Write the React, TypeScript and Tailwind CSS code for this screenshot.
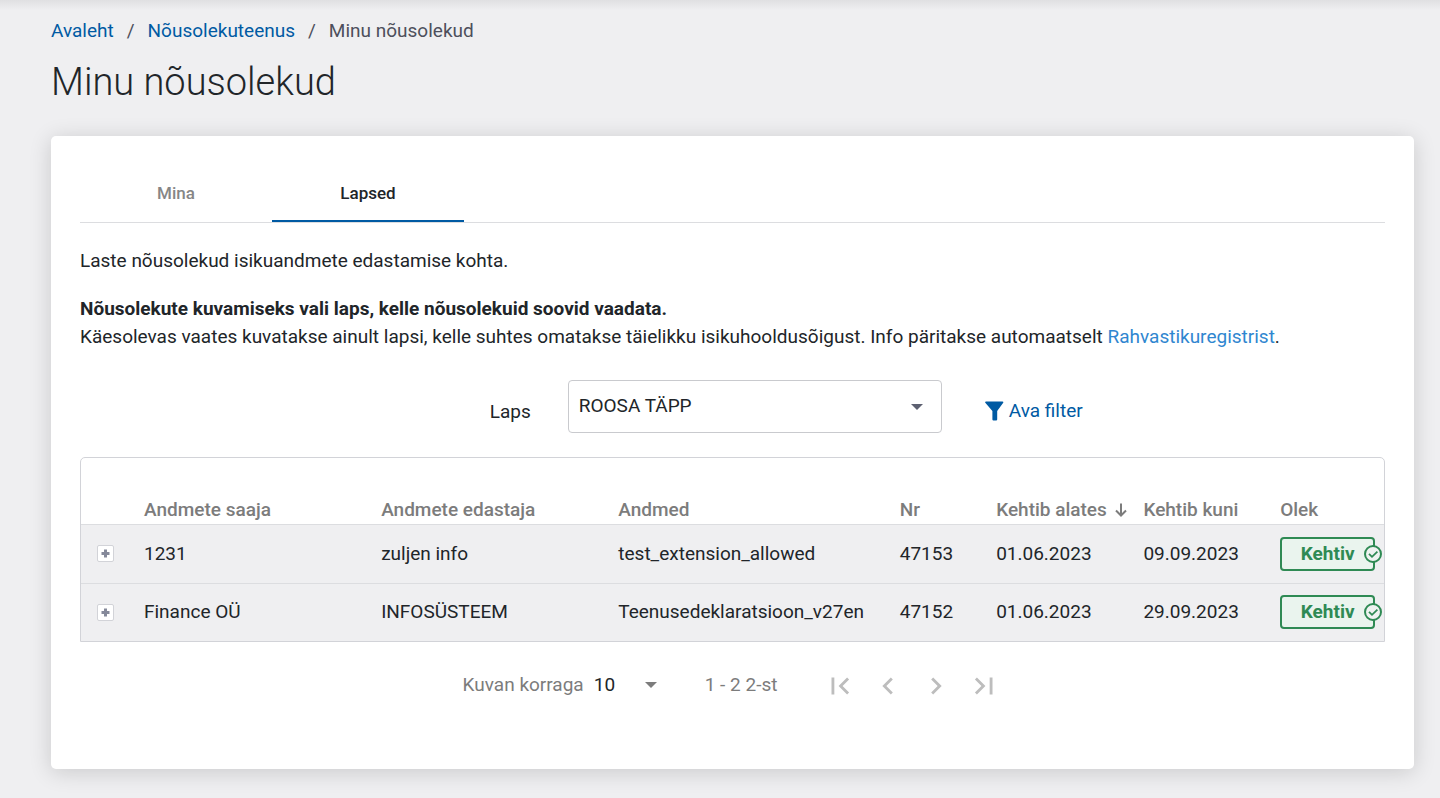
import React, { useState } from "react";

type Consent = {
  receiver: string;
  sender: string;
  data: string;
  nr: string;
  from: string;
  until: string;
  status: string;
};

const consents: Consent[] = [
  {
    receiver: "1231",
    sender: "zuljen info",
    data: "test_extension_allowed",
    nr: "47153",
    from: "01.06.2023",
    until: "09.09.2023",
    status: "Kehtiv",
  },
  {
    receiver: "Finance OÜ",
    sender: "INFOSÜSTEEM",
    data: "Teenusedeklaratsioon_v27en",
    nr: "47152",
    from: "01.06.2023",
    until: "29.09.2023",
    status: "Kehtiv",
  },
];

function Caret({ className }: { className: string }) {
  return (
    <svg className={className} width="12" height="6" viewBox="0 0 12 6" fill="currentColor" aria-hidden="true">
      <path d="M0 0h12L6 6z" />
    </svg>
  );
}

function Breadcrumbs() {
  return (
    <nav aria-label="Breadcrumb">
      <ol className="flex gap-[13px] text-[19px] leading-6">
        <li>
          <a href="#avaleht" className="text-[#005aa3]">Avaleht</a>
        </li>
        <li aria-hidden="true">/</li>
        <li>
          <a href="#nousolekuteenus" className="text-[#005aa3]">Nõusolekuteenus</a>
        </li>
        <li aria-hidden="true">/</li>
        <li aria-current="page">Minu nõusolekud</li>
      </ol>
    </nav>
  );
}

function Tabs() {
  const [active, setActive] = useState("Lapsed");
  return (
    <div role="tablist" className="flex border-b border-[#dcdde0]">
      {["Mina", "Lapsed"].map((tab) => (
        <button
          key={tab}
          type="button"
          role="tab"
          aria-selected={tab === active}
          onClick={() => setActive(tab)}
          className={
            tab === active
              ? "h-[58px] w-48 border-b-2 border-[#005aa3] pt-1 text-[17px] font-medium text-[#212529]"
              : "h-[58px] w-48 border-b-2 border-transparent pt-1 text-[17px] font-medium text-[#868686]"
          }
        >
          {tab}
        </button>
      ))}
    </div>
  );
}

function StatusBadge({ label }: { label: string }) {
  return (
    <span className="relative flex h-[34px] w-[95px] items-center justify-center rounded border-2 border-[#2f8a54] bg-[#eaf4ee] text-[19px] font-bold text-[#2f8a54]">
      {label}
      <svg className="absolute -right-[9px] top-[6px]" width="18" height="18" viewBox="0 0 18 18" fill="none" stroke="currentColor" aria-hidden="true">
        <circle cx="9" cy="9" r="8" strokeWidth="2" fill="#eff3f1" />
        <path d="M5 8.8l3 3 5.4-5.2" strokeWidth="1.8" />
      </svg>
    </span>
  );
}

function ConsentTable() {
  return (
    <div className="rounded-t-[5px] border border-[#d2d3d8]">
      <table className="w-full table-fixed text-left text-[19px] leading-6 text-[#212529]">
        <colgroup>
          <col className="w-[63px]" />
          <col className="w-[18.2%]" />
          <col className="w-[18.2%]" />
          <col className="w-[21.6%]" />
          <col className="w-[7.4%]" />
          <col className="w-[11.3%]" />
          <col className="w-[10.5%]" />
          <col />
        </colgroup>
        <thead className="text-[#7c7c7c]">
          <tr className="h-[66px] border-b border-[#dcdde0] align-bottom">
            <td />
            <th className="pb-[2px] font-medium">Andmete saaja</th>
            <th className="pb-[2px] font-medium">Andmete edastaja</th>
            <th className="pb-[2px] font-medium">Andmed</th>
            <th className="pb-[2px] font-medium">Nr</th>
            <th className="whitespace-nowrap pb-[2px] font-medium" aria-sort="descending">
              <button type="button" className="flex items-center gap-2">
                Kehtib alates
                <svg width="12" height="14" viewBox="0 0 12 14" fill="none" stroke="currentColor" strokeWidth="2" aria-hidden="true">
                  <path d="M6 0.5v12M1 7.5l5 5 5-5" />
                </svg>
              </button>
            </th>
            <th className="pb-[2px] font-medium">Kehtib kuni</th>
            <th className="pb-[2px] font-medium">Olek</th>
          </tr>
        </thead>
        <tbody>
          {consents.map((c) => (
            <tr key={c.nr} className="h-[59px] border-b border-[#dcdde0] bg-[#efeff1] last:h-[58px] last:border-b-0">
              <td className="pl-4">
                <button type="button" aria-label="Ava detailid" className="flex size-[17px] items-center justify-center rounded-xs border border-[#d2d3d8] bg-white text-[#85899a]">
                  <svg width="9" height="9" viewBox="0 0 9 9" fill="none" stroke="currentColor" strokeWidth="3" aria-hidden="true">
                    <path d="M4.5 0.5v8M0.5 4.5h8" />
                  </svg>
                </button>
              </td>
              <td>{c.receiver}</td>
              <td>{c.sender}</td>
              <td>{c.data}</td>
              <td>{c.nr}</td>
              <td>{c.from}</td>
              <td>{c.until}</td>
              <td><StatusBadge label={c.status} /></td>
            </tr>
          ))}
        </tbody>
      </table>
    </div>
  );
}

function PageButton({ label, path }: { label: string; path: string }) {
  return (
    <button type="button" aria-label={label} disabled className="flex size-12 items-center justify-center text-[#bdbdbd]">
      <svg width="34" height="34" viewBox="0 0 24 24" fill="currentColor" aria-hidden="true">
        <path d={path} />
      </svg>
    </button>
  );
}

function Pagination() {
  return (
    <div className="flex items-center justify-center pl-[6px] text-[19px] text-[#7c7c7c]">
      <label htmlFor="page-size" className="pr-[10px]">Kuvan korraga</label>
      <span className="relative flex items-center">
        <select id="page-size" defaultValue="10" className="w-[63px] appearance-none bg-transparent text-[#212529]">
          <option>10</option>
          <option>20</option>
        </select>
        <Caret className="pointer-events-none absolute right-0" />
      </span>
      <span className="pl-12 pr-[39px]">1 - 2 2-st</span>
      <div className="flex pt-[2px]">
        <PageButton label="Esimene leht" path="M18.41 16.59L13.82 12l4.59-4.59L17 6l-6 6 6 6zM6 6h2v12H6z" />
        <PageButton label="Eelmine leht" path="M15.41 7.41L14 6l-6 6 6 6 1.41-1.41L10.83 12z" />
        <PageButton label="Järgmine leht" path="M10 6L8.59 7.41 13.17 12l-4.58 4.59L10 18l6-6z" />
        <PageButton label="Viimane leht" path="M5.59 7.41L10.18 12l-4.59 4.59L7 18l6-6-6-6zM16 6h2v12h-2z" />
      </div>
    </div>
  );
}

export default function App() {
  return (
    <div className="min-h-screen bg-[#efeff1] font-['Roboto',sans-serif] text-[#4d4f5c]">
      <div className="h-[10px] bg-linear-to-b from-[#e0e0e2] to-[#efeff1]" />
      <main className="pb-7 pl-[51px] pr-[26px] pt-[9px]">
        <Breadcrumbs />
        <h1 className="pb-[30px] pt-[15px] text-[38px] font-light leading-12 text-[#212529]">Minu nõusolekud</h1>
        <section className="rounded-[5px] bg-white px-[29px] pb-[59px] pt-7 shadow-[0_3px_22px_rgba(0,0,0,0.16)]">
          <Tabs />
          <div className="pt-6 text-[19px] leading-7 text-[#212529]">
            <p className="pb-5">Laste nõusolekud isikuandmete edastamise kohta.</p>
            <p className="font-bold">Nõusolekute kuvamiseks vali laps, kelle nõusolekuid soovid vaadata.</p>
            <p>
              Käesolevas vaates kuvatakse ainult lapsi, kelle suhtes omatakse täielikku isikuhooldusõigust. Info päritakse automaatselt{" "}
              <a href="#rahvastikuregister" className="text-[#2f86d0]">Rahvastikuregistrist</a>.
            </p>
          </div>
          <div className="flex items-center pb-6 pl-[31.4%] pt-[29px] text-[19px]">
            <label htmlFor="child" className="w-[78px] pt-[11px] text-[#212529]">Laps</label>
            <span className="relative flex items-center">
              <select id="child" defaultValue="ROOSA TÄPP" className="h-[53px] w-[374px] appearance-none rounded border border-[#c9cace] bg-white px-[10px] text-[#212529]">
                <option>ROOSA TÄPP</option>
              </select>
              <Caret className="pointer-events-none absolute right-[19px] text-[#5d6071]" />
            </span>
            <button type="button" className="ml-[43px] flex items-center gap-1 pt-[9px] text-[#005aa3]">
              <svg width="20" height="20" viewBox="0 0 20 20" fill="currentColor" aria-hidden="true">
                <path d="M1 0.5h16.4q1.4 0.1 0.8 1.3L12.2 10v8.6q-0.1 0.9-1 0.9H8.4q-0.9 0-1-0.9V10L0.3 1.8Q-0.3 0.6 1 0.5z" />
              </svg>
              Ava filter
            </button>
          </div>
          <ConsentTable />
          <div className="pt-[18px]">
            <Pagination />
          </div>
        </section>
      </main>
    </div>
  );
}
